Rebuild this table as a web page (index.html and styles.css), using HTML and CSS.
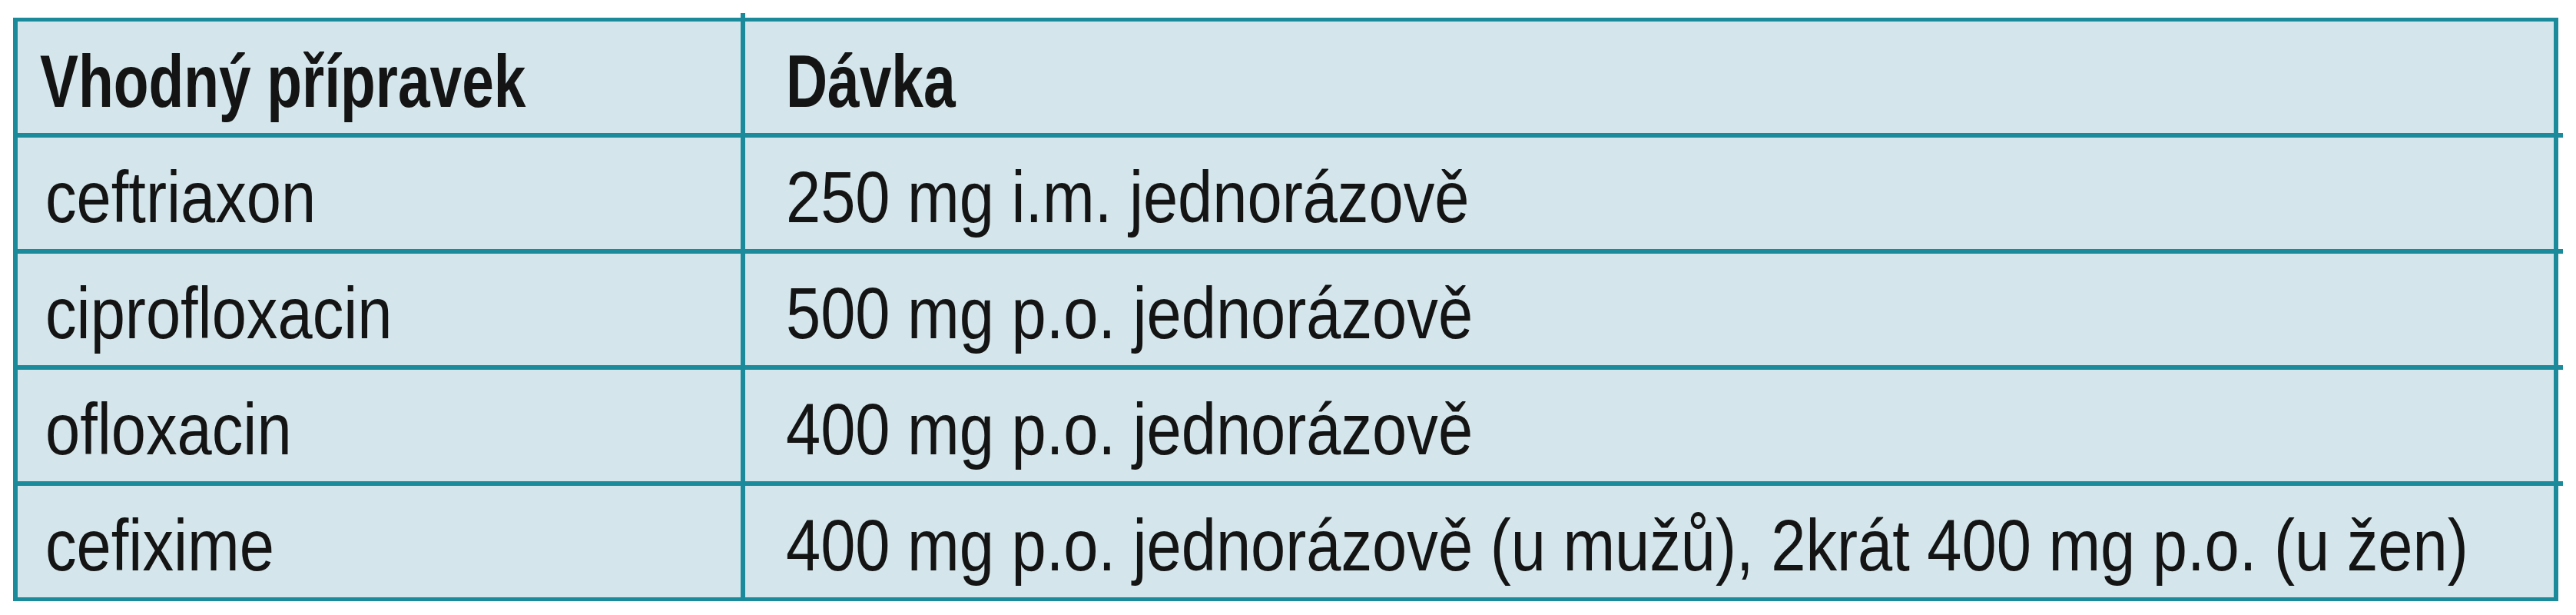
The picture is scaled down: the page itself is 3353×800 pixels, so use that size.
FILE: index.html
```html
<!DOCTYPE html>
<html lang="cs">
<head>
<meta charset="utf-8">
<title>Vhodný přípravek – Dávka</title>
<link rel="stylesheet" href="styles.css">
</head>
<body>
<div class="sheet">
  <div class="dose-table">
    <div class="row head">
      <div class="cell name"><span class="txt">Vhodný přípravek</span></div>
      <div class="cell dose"><span class="txt">Dávka</span></div>
    </div>
    <div class="row">
      <div class="cell name"><span class="txt">ceftriaxon</span></div>
      <div class="cell dose"><span class="txt">250 mg i.m. jednorázově</span></div>
    </div>
    <div class="row">
      <div class="cell name"><span class="txt">ciprofloxacin</span></div>
      <div class="cell dose"><span class="txt">500 mg p.o. jednorázově</span></div>
    </div>
    <div class="row">
      <div class="cell name"><span class="txt">ofloxacin</span></div>
      <div class="cell dose"><span class="txt">400 mg p.o. jednorázově</span></div>
    </div>
    <div class="row">
      <div class="cell name"><span class="txt">cefixime</span></div>
      <div class="cell dose"><span class="txt">400 mg p.o. jednorázově (u mužů), 2krát 400 mg p.o. (u žen)</span></div>
    </div>
  </div>
</div>
</body>
</html>
```
FILE: styles.css
```css
body {
  margin: 0;
  background: #ffffff;
}

.sheet {
  padding: 23px 0 0 17px;
}

.dose-table {
  width: 3313px;
  box-sizing: border-box;
  border: 6px solid #1b8a9b;
  border-top-width: 5px;
  border-bottom-width: 5px;
  background: #d4e6eb;
  font-family: "Liberation Sans", Arial, sans-serif;
  color: #141414;
}

.row {
  display: grid;
  grid-template-columns: 941px 1fr;
  position: relative;
}

.row + .row {
  border-top: 6px solid #1b8a9b;
}

.row + .row::after {
  content: "";
  position: absolute;
  top: -6px;
  right: -12px;
  width: 6px;
  height: 6px;
  background: #1b8a9b;
}

.cell {
  font-size: 95px;
  line-height: 135px;
  padding-top: 10px;
  white-space: nowrap;
  overflow: visible;
}

.txt {
  display: inline-block;
  transform-origin: 0 50%;
  transform: scaleX(0.855);
}

.name {
  padding-left: 36px;
}

.dose {
  padding-left: 53px;
  border-left: 6px solid #1b8a9b;
}

.head .cell {
  font-size: 96px;
  font-weight: 700;
}

.head .txt {
  transform: scaleX(0.78);
}

.head .name {
  padding-left: 29px;
}

.head .dose {
  position: relative;
}

.head .dose::before {
  content: "";
  position: absolute;
  left: -6px;
  top: -11px;
  width: 6px;
  height: 6px;
  background: #1b8a9b;
}
```
